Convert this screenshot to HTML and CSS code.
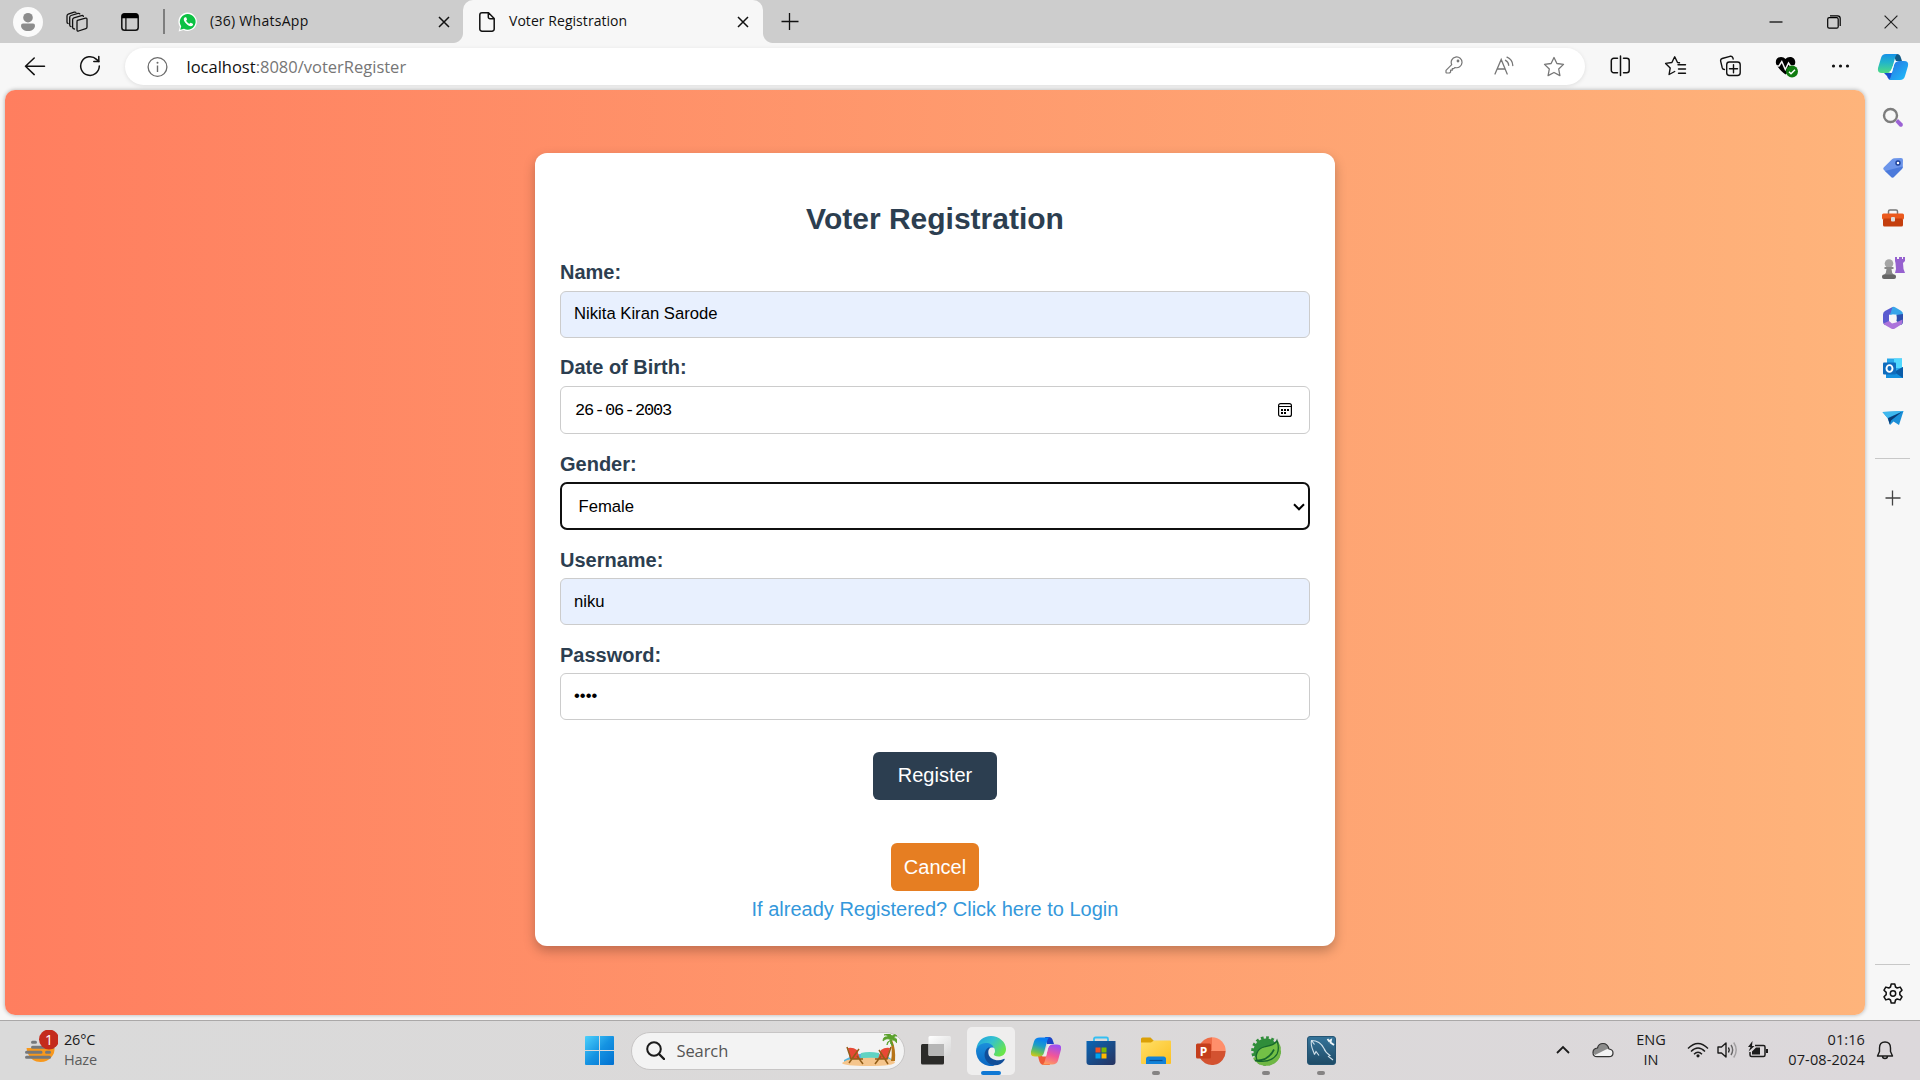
FILE: index.html
```html
<!DOCTYPE html>
<html lang="en">
<head>
<meta charset="utf-8">
<title>Voter Registration</title>
<link rel="stylesheet" href="styles.css">
</head>
<body>
<header class="tabstrip">
  <div class="tab-tools">
    <svg class="avatar" width="30" height="30" viewBox="0 0 30 30"><circle cx="15" cy="15" r="15" fill="#fafafa"/><circle cx="15" cy="10.700" r="4.800" fill="#8c8c8c"/><path d="M8 18.500q0-2 2-2h10q2 0 2 2c0 3.500-3 5.500-7 5.500s-7-2-7-5.500z" fill="#8c8c8c"/></svg>
    <svg class="workspaces" width="22" height="22" viewBox="0 0 22 22" fill="none" stroke="#111" stroke-width="1.300" stroke-linejoin="round" stroke-linecap="round"><path d="M11.500 9.300l8-2.200q1.500-.3 1.500 1.200v7.700q0 1.300-1.200 1.700l-7.300 2.300q-1.500.4-1.500-1.200v-7.900q0-1.200.5-1.600z"/><path d="M8.500 18q-1.900 0-1.900-1.700V8.800q0-1.600 1.300-2l7.600-2.200q1.500-.4 1.900.8"/><path d="M5 15.700q-1.200-.2-1.300-1.700V6.500q0-1.600 1.300-2l7-2.100q1.300-.3 1.800.5"/><path d="M2.100 12.500q-1.100-.4-1.100-1.600V5q0-1.500 1.200-1.900l6-1.900q1.200-.3 1.700.2"/></svg>
    <svg class="vtabs" width="18" height="18" viewBox="0 0 18 18"><rect x=".8" y=".8" width="16.400" height="16.400" rx="2.800" fill="none" stroke="#111" stroke-width="1.500"/><path d="M.8 5.300V3A2.300 2.300 0 0 1 3 .6h12A2.300 2.300 0 0 1 17.200 3v2.300z" fill="#000"/><path d="M4.900 5v12" stroke="#111" stroke-width="1.300"/></svg>
    <span class="separator"></span>
  </div>
  <div class="tab">
    <svg class="favicon" width="20" height="20" viewBox="0 0 20 20"><path d="M.6 19.500l1.300-4.700A9.200 9.200 0 1 1 5.500 18z" fill="#fff"/><path d="M2.200 17.800l1-3.500A7.900 7.900 0 1 1 6 16.800z" fill="#0cc143"/><path d="M7 5.300c-1.800.8-1.600 3.400.8 6 2.400 2.600 5.400 3.900 6.800 2.200.6-.9.500-1.600.2-1.800l-2-1c-.4-.1-.7.200-1.300 1-.3.300-2.900-1.600-3.300-3-.1-.3 1-1 .8-1.500l-.7-1.600c-.2-.4-.7-.5-1.300-.3z" fill="#fff"/></svg>
    <span class="tab-title title-wide">(36) WhatsApp</span>
    <svg class="tab-close" width="12" height="12" viewBox="0 0 12 12"><path d="M1 1l10 10M11 1L1 11" stroke="#111" stroke-width="1.500"/></svg>
  </div>
  <div class="tab tab-active">
    <svg class="pageicon" width="16" height="20" viewBox="0 0 16 20"><path d="M3 .8h6.500l5.700 5.700V17a2.200 2.200 0 0 1-2.200 2.200H3A2.200 2.200 0 0 1 .8 17V3A2.200 2.200 0 0 1 3 .8zM9.300 1v4a1.700 1.700 0 0 0 1.700 1.700h4" fill="none" stroke="#111" stroke-width="1.500"/></svg>
    <span class="tab-title">Voter Registration</span>
    <svg class="tab-close" width="12" height="12" viewBox="0 0 12 12"><path d="M1 1l10 10M11 1L1 11" stroke="#111" stroke-width="1.500"/></svg>
  </div>
  <svg class="newtab" width="18" height="18" viewBox="0 0 18 18"><path d="M.5 8.500h17M8.500 0v17" stroke="#111" stroke-width="1.300"/></svg>
  <div class="window-buttons">
    <svg width="14" height="14" viewBox="0 0 14 14"><path d="M.5 7h13" stroke="#000" stroke-width="1.200"/></svg>
    <svg width="14" height="14" viewBox="0 0 14 14" fill="none" stroke="#000" stroke-width="1.200"><rect x=".7" y="2.700" width="10.500" height="10.500" rx="1.500"/><path d="M3 .8h7.500a2.700 2.700 0 0 1 2.700 2.700V11"/></svg>
    <svg width="14" height="14" viewBox="0 0 14 14"><path d="M.6.6l12.800 12.800M13.400.6L.6 13.400" stroke="#222" stroke-width="1.200"/></svg>
  </div>
</header>

<nav class="toolbar">
  <svg class="back" width="22" height="20" viewBox="0 0 22 20" fill="none" stroke="#111" stroke-width="1.500" stroke-linecap="round" stroke-linejoin="round"><path d="M10.200 1L1.500 9.300l8.700 8.300M1.500 9.300H20.500"/></svg>
  <svg class="reload" width="22" height="22" viewBox="0 0 22 22" fill="none" stroke="#111" stroke-width="1.500" stroke-linecap="round"><path d="M20.300 11A9.300 9.300 0 1 1 17.500 4.400l2.200 2"/><path d="M19.800 1.600v5h-5"/></svg>
  <div class="address">
    <svg width="22" height="22" viewBox="0 0 22 22"><circle cx="11.500" cy="11" r="9.400" fill="none" stroke="#6b6b6b" stroke-width="1.300"/><path d="M11.500 9.500V16" stroke="#6b6b6b" stroke-width="1.400"/><circle cx="11.500" cy="6.800" r="1" fill="#6b6b6b"/></svg>
    <span class="url"><span class="host">localhost</span>:8080/voterRegister</span>
    <div class="address-actions">
      <svg width="18" height="18" viewBox="0 0 18 18" fill="none" stroke="#767676" stroke-width="1.200" stroke-linejoin="round"><path d="M6.700 8.600A5.400 5.400 0 1 1 10 11.500L8.700 12.600H7.300v1.600H5.600V16l-1 1H1.800q-.8 0-.8-.8v-1.900z"/><circle cx="13" cy="5" r=".8" fill="#767676"/></svg>
      <svg width="20" height="20" viewBox="0 0 20 20" fill="none" stroke="#767676" stroke-width="1.300" stroke-linecap="round"><path d="M1 18L7.200 3.500 13.200 18M3.300 13h7.800M11.500 4.300q3 1.500 3.200 5M13 1.200q5.500 2.300 5.800 8.300"/></svg>
      <svg width="22" height="22" viewBox="0 0 22 22" fill="none" stroke="#767676" stroke-width="1.300" stroke-linejoin="round"><path d="M11 1.500l2.900 6 6.600.9-4.800 4.600 1.200 6.600-5.900-3.100-5.900 3.100L6.300 13 1.500 8.400l6.600-.9z"/></svg>
    </div>
  </div>
  <div class="toolbar-actions">
    <svg width="22" height="22" viewBox="0 0 22 22" fill="none" stroke="#111" stroke-width="1.500" stroke-linecap="round"><path d="M8 3.300H4.300A2.500 2.500 0 0 0 1.800 5.800v9.400a2.500 2.500 0 0 0 2.500 2.500H8M14 3.300h3.200a2.500 2.500 0 0 1 2.500 2.500v9.400a2.500 2.500 0 0 1-2.500 2.500H14M11 1v19.500"/></svg>
    <svg width="22" height="22" viewBox="0 0 22 22" fill="none" stroke="#111" stroke-width="1.400" stroke-linecap="round" stroke-linejoin="round"><path d="M15 7.800l-2-.3-2.800-5.700-2.800 5.700-6.300.9 4.600 4.500L4.600 19.500l5.600-3M13.500 9.700H21M14 14h7M14 18.300h7"/></svg>
    <svg width="22" height="22" viewBox="0 0 22 22" fill="none" stroke="#111" stroke-width="1.400" stroke-linecap="round" stroke-linejoin="round"><path d="M5 14.500q-1.800 0-2.300-1.800L1.200 6.300q-.5-2.200 1.500-2.800L10.500 1.300q2-.5 2.700 1.200l.5 1.500"/><rect x="7.200" y="7" width="13.500" height="13.500" rx="2.700"/><path d="M14 9.800v8M10 13.800h8"/></svg>
    <svg class="heart" width="24" height="23" viewBox="0 0 24 23"><path d="M11 4C13.500.7 20.800 1.300 20.800 7.300c0 4-6 9.500-9.800 12.200C7 16.300 1.300 11 1.300 7.300 1.300 1.300 8.500.7 11 4z" fill="#000"/><path d="M0 11h4.500l2.800-4.500 3.500 8L14 8l2 3h5" fill="none" stroke="#f7f7f7" stroke-width="1.500"/><circle cx="17.500" cy="16.500" r="6" fill="#107c10"/><path d="M14.500 16.800l2 2 4-4" fill="none" stroke="#fff" stroke-width="1.500"/></svg>
    <svg width="22" height="22" viewBox="0 0 22 22" fill="#111"><circle cx="4" cy="11" r="1.600"/><circle cx="11" cy="11" r="1.600"/><circle cx="18" cy="11" r="1.600"/></svg>
  </div>
  <svg class="copilot" width="32" height="28" viewBox="0 0 32 28">
    <defs>
      <linearGradient id="ca" x1="0" y1="0" x2="0" y2="1"><stop offset="0" stop-color="#1691e8"/><stop offset=".45" stop-color="#22b5c9"/><stop offset="1" stop-color="#4fdc82"/></linearGradient>
      <linearGradient id="cb" x1="0" y1="0" x2="1" y2="1"><stop offset="0" stop-color="#2a6fe0"/><stop offset="1" stop-color="#1ec0fb"/></linearGradient>
    </defs>
    <path d="M16 1h4q3 0 4 4l1 3h-6z" fill="#125a86"/><path d="M7 20h9l3 7h-4q-4 0-5-4z" fill="#1650d0"/>
    <path d="M9 1h12q-2 0-3 4l-3 11q-1 4-5 4H5q-5 0-4-5L4 5q1-4 5-4z" fill="url(#ca)"/>
    <path d="M23 27H11q2 0 3-4l3-11q1-4 5-4h5q5 0 4 5l-3 10q-1 4-5 4z" fill="url(#cb)"/>
    <path d="M18 8h4q-4 0-5 4l-2 7h-3q2-1 3-4z" fill="#fff"/>
  </svg>
</nav>

<main class="workspace">
  <section class="page">
    <form class="card">
      <h1>Voter Registration</h1>
      <label for="name">Name:</label>
      <input class="field autofill" id="name" type="text" value="Nikita Kiran Sarode">
      <label>Date of Birth:</label>
      <div class="field date"><span class="date-value"><span>26</span><i>-</i><span>06</span><i>-</i><span>2003</span></span>
        <svg width="14" height="14" viewBox="0 0 14 14"><rect x=".6" y=".6" width="12.800" height="12.800" rx="2" fill="none" stroke="#000" stroke-width="1.200"/><path d="M1 3.500h12" stroke="#000"/><path d="M3 6h2v2H3zM6 6h2v2H6zM9 6h2v2H9zM3 9h2v2H3zM6 9h2v2H6z"/></svg>
      </div>
      <label class="low">Gender:</label>
      <div class="field select"><span>Female</span>
        <svg width="12" height="8" viewBox="0 0 12 8"><path d="M1 1.300l5 5 5-5" fill="none" stroke="#000" stroke-width="2"/></svg>
      </div>
      <label class="low" for="user">Username:</label>
      <input class="field autofill user" id="user" type="text" value="niku">
      <label class="low" for="pass">Password:</label>
      <input class="field" id="pass" type="password" value="niku">
      <button class="btn register" type="button">Register</button>
      <button class="btn cancel" type="button">Cancel</button>
      <a class="login">If already Registered? Click here to Login</a>
    </form>
  </section>
  <aside class="sidebar">
    <div class="side-icons">
      <svg width="22" height="22" viewBox="0 0 22 22"><path d="M14 14l2-2 4.500 4.500q1 1.500-.2 2.700-1.300 1.200-2.700.2L13.500 15z" fill="#9b62d4"/><circle cx="8.500" cy="8.500" r="6.500" fill="none" stroke="#7d7d7d" stroke-width="2.400"/></svg>
      <svg width="22" height="22" viewBox="0 0 22 22"><path d="M1.700 10.500L10 2.200Q11 1.200 12.500 1.200L19 1q2 0 2 2l-.2 6.500q0 1.500-1 2.500l-8 8q-1.300 1.200-2.500 0l-7.600-7.200q-1-1.200 0-2.300z" fill="#6c95ea"/><path d="M20.800 9.500q0 1.500-1 2.500l-8 8q-1.300 1.200-2.500 0L3 14z" fill="#4c7adb"/><circle cx="16" cy="6" r="2" fill="#fff" stroke="#1e4198" stroke-width="1.400"/></svg>
      <svg width="24" height="20" viewBox="0 0 24 20"><path d="M7.500 6V3.500q0-1.500 1.500-1.500h6q1.500 0 1.500 1.500V6" fill="none" stroke="#777" stroke-width="1.500"/><rect x="1" y="5.500" width="22" height="6" rx="1.500" fill="#eb5a1e"/><rect x="2" y="10.500" width="20" height="8" rx="1.500" fill="#c43e0d"/><rect x="10" y="9" width="4" height="4.500" rx="1" fill="#ddd"/></svg>
      <svg width="24" height="24" viewBox="0 0 24 24"><path d="M14 1h2v2h2V1h3v2h1V1h2v4l-2 2 .5 6 1.500 4H14l1-4-.5-6-.5-2z" fill="#9661cf"/><circle cx="8" cy="7.500" r="4.300" fill="#a5a5a5"/><path d="M3.500 11h9v2h-2q0 4 2.500 6H3q2.500-2 2.500-6h-2z" fill="#888"/><rect x="1" y="18.500" width="14" height="4.500" rx="2" fill="#666"/></svg>
      <svg width="22" height="24" viewBox="0 0 22 24"><path d="M10.500 1L3 5Q1 6 1 8.500V16q0 2 2 3l4-1.500V9l5.500-3.500V2.500z" fill="#5a5bd0"/><path d="M10.500 1q1.500-.5 3 .5l5.500 3.300q2 1.200 2 3.700V13l-7-4.500-6 .5z" fill="#38a6ea"/><path d="M21 8v8q0 2-2 3l-4.500-4V9z" fill="#2d4fae"/><path d="M1.500 17.500L7 15l3 2.500 4-1 6.500-3V16q0 2-2 3l-6 3.700q-1.500.8-3 0L3 19z" fill="#ac74db"/><circle cx="11" cy="12" r="3.600" fill="#f7f7f7"/></svg>
      <svg width="22" height="22" viewBox="0 0 22 22"><path d="M5 1.500h15v17H5z" fill="#28a8ea"/><path d="M12 1.500h8V11h-8z" fill="#50d9ff"/><path d="M4 10l9 4 8-4v11H4z" fill="#1490df"/><path d="M21 10v11L12 15z" fill="#0a5ca8"/><rect x="1" y="5.500" width="13" height="12" rx="1" fill="#0f6cbd"/><ellipse cx="7.500" cy="11.500" rx="3" ry="3.400" fill="none" stroke="#fff" stroke-width="1.900"/></svg>
      <svg width="22" height="18" viewBox="0 0 22 18"><path d="M.5 3L21.500 2 17 16l-5.500-3.500L8 16 5.500 9z" fill="#1b8fd8"/><path d="M.5 3L21.500 2 5.500 9z" fill="#3fb8ee"/><path d="M20 2.700L6 9.200l1.800 6.300L9 11.500z" fill="#0b3b75"/></svg>
    </div>
    <span class="side-rule"></span>
    <svg class="side-add" width="16" height="16" viewBox="0 0 16 16"><path d="M.5 8h15M7.500 .5v15" stroke="#444" stroke-width="1.300"/></svg>
    <span class="side-rule side-rule-bottom"></span>
    <svg class="gear" width="22" height="22" viewBox="0 0 22 22" fill="none" stroke="#111" stroke-width="1.500" stroke-linejoin="round"><path d="M9.200 1h3.600l.7 3 1.700 1 3-.9 1.800 3.100-2.200 2.200v2.200l2.200 2.200-1.800 3.100-3-.9-1.700 1-.7 3H9.200l-.7-3-1.700-1-3 .9L2 13.800l2.200-2.200V9.400L2 7.200l1.800-3.100 3 .9 1.700-1z"/><circle cx="11" cy="10.500" r="2.700"/></svg>
  </aside>
</main>

<footer class="taskbar">
  <div class="weather">
    <svg width="34" height="36" viewBox="0 0 34 36"><path d="M2.500 18h28q.5 5-3 9-4 5-11 5-9 0-13-9z" fill="#f7981d"/><path d="M0 0h34v17.500H0z" fill="#dadada"/><path d="M8.500 12.300h3M8.500 17.300H29M2.500 22.300H17M22.500 22.300H25.500M2.500 27.300H25.500" stroke="#75787b" stroke-width="3" stroke-linecap="round"/><circle cx="25" cy="9.500" r="10" fill="#c42b1c"/><text x="25" y="14.700" text-anchor="middle" class="badge-number">1</text></svg>
    <div class="weather-text"><span>26°C</span><span class="muted">Haze</span></div>
  </div>
  <div class="apps">
    <svg class="start" width="29" height="29" viewBox="0 0 29 29"><defs><linearGradient id="win" x1="0" y1="0" x2="1" y2="1"><stop offset="0" stop-color="#4cd0fb"/><stop offset=".5" stop-color="#1593e2"/><stop offset="1" stop-color="#0170d0"/></linearGradient></defs><path d="M1 0h13v14H0V1q0-1 1-1zM15 0h13q1 0 1 1v13H15zM0 15h14v14H1q-1 0-1-1zM15 15h14v13q0 1-1 1H15z" fill="url(#win)"/></svg>
    <div class="search">
      <svg width="19" height="19" viewBox="0 0 19 19" fill="none" stroke="#1b1b1b" stroke-width="2"><circle cx="8" cy="8" r="6.800"/><path d="M13 13l5 5" stroke-width="2.400" stroke-linecap="round"/></svg>
      <span>Search</span>
      <svg class="beach" width="56" height="33" viewBox="0 0 56 33"><path d="M3 26q12-7 24-7 16 0 25 7v4H3z" fill="#56b8df"/><path d="M20 19q8-2 18 0v5H20z" fill="#60d3c2"/><path d="M1 29q5-4 12-4 15-2 24-1 10-1 17 4 0 4-26 4T1 29z" fill="#f5c58c"/><path d="M7 14q5-1 9 2l3 9H9zM49 14q-5-1-9 2l-3 9h9z" fill="#e74835"/><path d="M6 13l4 12h12M8 29l10-14M22 30l-6-8M50 13l-4 12H34M47 30L38 16M34 30l6-8" fill="none" stroke="#925e18" stroke-width="1.500"/><path d="M49 6q3 10 1 21h4q1-12-3-21z" fill="#b67419"/><path d="M50 6q-4-3-8 1 0-5 5-4-1-3-4-2 5-3 8 1 3-3 5 0-3-1-3 2 4 0 3 5-3-4-6-3l2 6q-4-2-2-6-3 1-4 5-1-3 4-5z" fill="#5aa12c" stroke="#5aa12c" stroke-width=".8"/></svg>
    </div>
    <svg class="taskview" width="30" height="29" viewBox="0 0 30 29"><defs><linearGradient id="tv" x1="0" y1="0" x2="1" y2="1"><stop offset="0" stop-color="#fff"/><stop offset="1" stop-color="#d7d7d7"/></linearGradient></defs><rect x="0" y="8" width="23" height="20.500" rx="1.500" fill="#2b2b29"/><rect x="7.500" y="0" width="22.500" height="20" rx="1.500" fill="url(#tv)"/><path d="M7.500 8H23v12H9q-1.500 0-1.500-1.500z" fill="#b6b6b6"/></svg>
    <div class="app app-current">
      <svg width="32" height="32" viewBox="0 0 32 32"><defs><linearGradient id="e1" x1="0" y1="0" x2="1" y2=".6"><stop offset="0" stop-color="#1e9fe0"/><stop offset=".5" stop-color="#34c1cf"/><stop offset="1" stop-color="#69e54b"/></linearGradient><linearGradient id="e2" x1="0" y1="0" x2="0" y2="1"><stop offset="0" stop-color="#1b8fdb"/><stop offset="1" stop-color="#0b66c2"/></linearGradient></defs><path d="M1.300 14.500C2 6 8.500 1 16 1c8 0 15 6 15 13 0 5-3.500 7.500-7.500 7.500-3 0-5-1-4.700-2.200.3-.9 1.200-1.500 1.200-3.300 0-4-4-7-9-7-4.500 0-8 2-9.700 5.500z" fill="url(#e1)"/><path d="M1 16c0-4 4.500-8 10-8 4 0 7 2 8 5-6-2-9 4-7 9 1.600 4.500 5 8 8 8.500A15 15 0 0 1 1 16z" fill="url(#e2)"/><path d="M13.500 12.500C8 16 9 23 12 26.500c5 6 14 4.500 17.500-1.500.5-1 0-1.500-.8-1-6 3-14.200.5-15.200-5-.5-2.800 0-5 2-6.500z" fill="#114e99"/></svg>
      <span class="running"></span>
    </div>
    <div class="app">
      <svg width="30" height="28" viewBox="0 0 30 28"><defs><linearGradient id="c1" x1=".3" y1="0" x2="0" y2="1"><stop offset="0" stop-color="#087ff2"/><stop offset=".35" stop-color="#1b9cc7"/><stop offset=".7" stop-color="#6dc153"/><stop offset="1" stop-color="#f3c806"/></linearGradient><linearGradient id="c2" x1=".5" y1="0" x2=".2" y2="1"><stop offset="0" stop-color="#a150ef"/><stop offset=".5" stop-color="#f25698"/><stop offset="1" stop-color="#ffa25c"/></linearGradient></defs><path d="M14 0h4q3 0 4 4l1 3h-7z" fill="#1b43c4"/><path d="M7 19h9l3 9h-6q-4 0-5-5z" fill="#ef5a39"/><path d="M9 .5h10q-2 0-3 4l-3 11q-1 4-5 4H4q-5 0-4-5l3-10q1-4 6-4z" fill="url(#c1)"/><path d="M21 27.500H11q2 0 3-4l3-12q1-4 5-4h4q5 0 4 5l-3 11q-1 4-6 4z" fill="url(#c2)"/><path d="M17 7.500h4q-3 0-4 4l-2 8h-4q2-1 2.500-4z" fill="#ece9ef"/></svg>
    </div>
    <div class="app">
      <svg width="30" height="30" viewBox="0 0 30 30"><defs><linearGradient id="ms" x1="0" y1="0" x2="1" y2="1"><stop offset="0" stop-color="#0a66b5"/><stop offset="1" stop-color="#28335f"/></linearGradient></defs><path d="M8 6V3q0-1.500 1.500-1.500h11Q22 1.500 22 3v3" fill="none" stroke="#35bff2" stroke-width="1.800"/><path d="M.5 5h29v21q0 3-3 3h-23q-3 0-3-3z" fill="url(#ms)"/><path d="M9.500 11.500h5v5h-5z" fill="#f25022"/><path d="M15.500 11.500h5v5h-5z" fill="#7fba00"/><path d="M9.500 17.500h5v5h-5z" fill="#00a4ef"/><path d="M15.500 17.500h5v5h-5z" fill="#ffb900"/></svg>
    </div>
    <div class="app">
      <svg width="30" height="28" viewBox="0 0 30 28"><defs><linearGradient id="fo" x1="0" y1="0" x2="1" y2="1"><stop offset="0" stop-color="#ffdf68"/><stop offset="1" stop-color="#fcc021"/></linearGradient></defs><path d="M0 2q0-1.500 1.500-1.500h8l3 3h0v5H0z" fill="#dba007"/><path d="M0 5.500h10l3-2h16q1 0 1 1V26q0 1-1 1H1q-1 0-1-1z" fill="url(#fo)"/><path d="M5 27v-5q0-2.500 2.500-2.500h15q2.500 0 2.500 2.500v5z" fill="#1282d8"/><path d="M8.500 23.500h13" stroke="#084f94" stroke-width="1.200"/></svg>
      <span class="open"></span>
    </div>
    <div class="app">
      <svg width="30" height="28" viewBox="0 0 30 28"><path d="M16 14V.3A13.700 13.700 0 0 0 3 10z" fill="#ed6c47"/><path d="M16 .3A13.700 13.700 0 0 1 29.700 14H16z" fill="#ff8f6b"/><path d="M29.700 14A13.800 13.800 0 0 1 3 19l3-5z" fill="#d35230"/><rect x="0" y="6.500" width="15" height="15" rx="1.500" fill="#c43e1c"/><text x="7.500" y="18.500" text-anchor="middle" class="ppt-letter">P</text></svg>
    </div>
    <div class="app">
      <svg width="30" height="30" viewBox="0 0 30 30"><circle cx="15" cy="15" r="12.500" fill="#2f8d3a"/><circle cx="15" cy="15" r="13.300" fill="none" stroke="#2f8d3a" stroke-width="3" stroke-dasharray="2.700 2.500"/><path d="M27 5q4 6 2.500 14T18 29.500Q7 31 2 22l15-7z" fill="#6fb744"/><path d="M26 4.500c-2 5-8 5-13 6.500-7 2-9.500 9-6.500 14 8 1 16-1 19.500-7 2-4 1.500-9 0-13.500z" fill="#73c046" stroke="#17682d" stroke-width="1.300"/><path d="M4 24.500q13 1 19-11" fill="none" stroke="#17682d" stroke-width="1.700"/></svg>
      <span class="open"></span>
    </div>
    <div class="app">
      <svg width="29" height="29" viewBox="0 0 29 29"><defs><linearGradient id="my" x1="0" y1="0" x2="0" y2="1"><stop offset="0" stop-color="#35749a"/><stop offset="1" stop-color="#1f4b66"/></linearGradient></defs><rect x=".5" y=".5" width="28" height="28" rx="2.500" fill="url(#my)" stroke="#245473"/><path d="M7.500 18.500C6 14 3 9 4.500 4.500c5 0 10 3 12.500 8 1 3 3 5 6 7l-1.500 1L26 24M7.500 18.500l1.500-3 3 4M4.500 4.500l3 4" fill="none" stroke="#d3e2eb" stroke-width="1.100"/><path d="M20.500 3l1.500 2 2-1-.5 2.500L27 9" fill="none" stroke="#eef5f8" stroke-width="1.800"/></svg>
      <span class="open"></span>
    </div>
  </div>
  <div class="tray">
    <svg class="chev" width="14" height="10" viewBox="0 0 14 10"><path d="M1 8l6-6 6 6" fill="none" stroke="#1b1b1b" stroke-width="1.800"/></svg>
    <svg class="cloud" width="22" height="16" viewBox="0 0 22 16"><path d="M5 14.700h12q4 0 4-3.700 0-3.500-4-4Q15.500 1.500 11 1.500T5.500 6Q1 6.500 1 10.500q0 4.200 4 4.200z" fill="#f3f3f3"/><path d="M1 10.500Q1 6.500 5.500 6 7 1.500 11 1.500t6 5l-3 1-11 5.500z" fill="#8b8b8b"/><path d="M5 14.700h12q4 0 4-3.700 0-3.500-4-4Q15.500 1.500 11 1.500T5.500 6Q1 6.500 1 10.500q0 4.200 4 4.200z" fill="none" stroke="#333" stroke-width="1.200"/></svg>
    <div class="lang"><span>ENG</span><span>IN</span></div>
    <svg class="wifi" width="22" height="16" viewBox="0 0 22 16" fill="none" stroke="#1b1b1b" stroke-width="1.400"><path d="M1 6.500q10-10 20 0M4 9.500q7-7 14 0M7 12.200q4-4 8 0"/><circle cx="11" cy="13.800" r="1.600" fill="#1b1b1b" stroke="none"/></svg>
    <svg class="sound" width="22" height="18" viewBox="0 0 22 18" fill="none" stroke="#1b1b1b" stroke-width="1.400" stroke-linejoin="round"><path d="M1 6h3.500L9 2v14l-4.500-4H1z"/><path d="M11.500 6.500q1.500 2.500 0 5"/><path d="M14 4q3.300 5 0 10" opacity=".6"/><path d="M16.700 1.500q5 7.500 0 15" opacity=".3"/></svg>
    <svg class="battery" width="22" height="18" viewBox="0 0 22 18"><path d="M8 4.500h8.500q1.500 0 1.500 1.500v8q0 1.500-1.500 1.500h-12Q3 15.500 3 14v-3" fill="none" stroke="#1b1b1b" stroke-width="1.500"/><path d="M9 6.500h4v7H5v-3zM19 8h2v4h-2z" fill="#1b1b1b"/><path d="M5.500 0L1 6h2.500L1.500 10.500 7.500 5H5z" fill="#1b1b1b"/></svg>
    <div class="clock"><span>01:16</span><span>07-08-2024</span></div>
    <svg class="bell" width="18" height="20" viewBox="0 0 18 20" fill="none" stroke="#1b1b1b" stroke-width="1.400" stroke-linejoin="round"><path d="M9 1q-5.500 0-5.500 6v3.500L1.500 15h15L14.500 10.500V7q0-6-5.500-6zM6.500 15q0 2.500 2.500 2.500t2.500-2.500"/></svg>
  </div>
</footer>
</body>
</html>
```
FILE: styles.css
```css
* { box-sizing: border-box; }

body {
  margin: 0;
  width: 1920px;
  height: 1080px;
  display: flex;
  flex-direction: column;
  overflow: hidden;
  background: #f7f7f7;
  font-family: "Open Sans", "Noto Sans", sans-serif;
  color: #1b1b1b;
}

svg { display: block; flex: none; }

/* Tab strip */
.tabstrip {
  height: 43px;
  flex: none;
  display: flex;
  align-items: center;
  background: #cdcdcd;
}
.tab-tools { width: 166px; display: flex; align-items: center; padding-left: 13px; }
.workspaces { margin-left: 23px; }
.vtabs { margin-left: 33px; }
.separator { width: 2px; height: 25px; margin-left: 24px; background: #7e7e7e; }
.tab {
  width: 297px;
  height: 43px;
  display: flex;
  align-items: center;
  padding: 0 13px 0 12px;
}
.favicon { margin-right: 12px; margin-top: 1px; }
.tab-title { font-size: 14px; line-height: 20px; color: #111; padding-bottom: 1px; white-space: nowrap; letter-spacing: 0.05px; }
.title-wide { letter-spacing: 0.28px; }
.tab-close { margin-left: auto; margin-top: 1px; }
.tab-active {
  position: relative;
  width: 300px;
  padding: 0 14px 0 16px;
  background: #f7f7f7;
  border-radius: 10px 10px 0 0;
}
.tab-active::before,
.tab-active::after {
  content: "";
  position: absolute;
  bottom: 0;
  width: 10px;
  height: 10px;
}
.tab-active::before { left: -10px; background: radial-gradient(circle at 0 0, #cdcdcd 9.5px, #f7f7f7 10.5px); }
.tab-active::after { right: -10px; background: radial-gradient(circle at 100% 0, #cdcdcd 9.5px, #f7f7f7 10.5px); }
.pageicon { margin-right: 14px; margin-top: 1px; }
.newtab { margin-left: 18px; }
.window-buttons { margin-left: auto; margin-right: 22px; display: flex; gap: 43.500px; }

/* Toolbar */
.toolbar { height: 47px; flex: none; display: flex; align-items: center; padding-left: 24px; }
.reload { margin-left: 33px; margin-top: -1px; }
.address {
  width: 1460px;
  height: 37px;
  margin-left: 24px;
  padding: 0 6px 0 21px;
  display: flex;
  align-items: center;
  background: #fff;
  border-radius: 19px;
  box-shadow: 0 1px 4px rgba(0, 0, 0, 0.1);
}
.url { margin-left: 18.500px; font-size: 16.500px; letter-spacing: 0; color: #767676; }
.host { color: #111; }
.address-actions { margin-left: auto; display: flex; }
.address-actions svg { width: 50px; }
.toolbar-actions { display: flex; margin-left: 7.500px; }
.toolbar-actions svg { width: 55px; }
.toolbar-actions .heart { margin-left: 1px; margin-right: -1px; }
.copilot { margin-left: 9px; }

/* Page and sidebar */
.workspace { height: 930px; flex: none; display: flex; padding-left: 5px; }
.page {
  width: 1860px;
  height: 925px;
  display: flex;
  justify-content: center;
  align-items: flex-start;
  padding-top: 63px;
  border-radius: 10px;
  background: linear-gradient(to right, #ff7e5f, #feb47b);
  box-shadow: 0 0 4px rgba(0, 0, 0, 0.3);
}
.card {
  width: 800px;
  height: 793px;
  padding: 49px 25px 0;
  display: flex;
  flex-direction: column;
  background: #fff;
  border-radius: 12px;
  box-shadow: 0 5px 12px rgba(0, 0, 0, 0.25);
  font-family: "Liberation Sans", Arial, sans-serif;
}
.card h1 {
  margin: 0 0 25px;
  font-size: 30px;
  line-height: 34px;
  text-align: center;
  color: #2c3e50;
}
.card label {
  height: 30px;
  font-size: 20px;
  line-height: 23px;
  font-weight: bold;
  color: #2c3e50;
}
.card .low { padding-top: 1px; }
.field {
  width: 750px;
  height: 47px;
  margin: 0 0 18px;
  padding: 0 13px 1px;
  border: 1px solid #ccc;
  border-radius: 6px;
  background: #fff;
  font: 16.670px "Liberation Sans", Arial, sans-serif;
  color: #000;
  outline: none;
}
.autofill { background: #e8f0fe; }
.user { padding-bottom: 0; padding-top: 1px; }
.date, .select { height: 48px; display: flex; align-items: center; justify-content: space-between; }
.date { padding: 0 17px 0 14px; }
.date-value { display: flex; font-family: "Liberation Mono", monospace; font-size: 17px; letter-spacing: -1.200px; }
.date-value i { width: 12px; text-align: center; font-style: normal; }
.select { border: 2px solid #101010; padding: 1px 3px 0 16.500px; border-radius: 7px; }
.btn {
  height: 48px;
  align-self: center;
  padding: 0;
  border: 0;
  border-radius: 6px;
  color: #fff;
  font: 20px "Liberation Sans", Arial, sans-serif;
}
.register { width: 124px; margin-top: 14px; padding-bottom: 2px; background: #2c3e50; }
.cancel { width: 88px; margin-top: 43px; background: #e67e22; }
.login { margin-top: 7px; text-align: center; font-size: 20px; line-height: 23px; color: #3498db; }

.sidebar { width: 55px; display: flex; flex-direction: column; align-items: center; }
.side-icons { display: flex; flex-direction: column; align-items: center; padding-top: 3px; padding-left: 1px; }
.side-icons svg { height: 50px; }
.side-rule { width: 35px; height: 1px; margin-top: 15px; background: #c8c8c8; }
.side-add { margin-top: 31px; }
.side-rule-bottom { margin-top: auto; }
.gear { margin: 18px 0 15px; }

/* Taskbar */
.taskbar {
  height: 60px;
  flex: none;
  display: flex;
  align-items: center;
  border-top: 1px solid #aaa8a8;
  background: linear-gradient(to right, #dadada, #dbd9d9 50%, #dcd8db);
  font-size: 14.500px;
  line-height: 20px;
}
.weather { width: 585px; display: flex; padding-left: 24px; }
.weather svg { margin-top: -1px; }
.weather-text { display: flex; flex-direction: column; margin: -1px 0 1px 6px; letter-spacing: -0.2px; }
.muted { color: #5c5c5c; }
.badge-number { font: 14px "Open Sans", sans-serif; fill: #fff; }
.ppt-letter { font: bold 12px "Open Sans", sans-serif; fill: #fff; }
.apps { display: flex; align-items: center; }
.search {
  width: 274px;
  height: 38px;
  margin: 0 16px 0 17px;
  padding: 0 7px 0 13.500px;
  display: flex;
  align-items: center;
  border: 1px solid #c7c5c5;
  border-radius: 19px;
  background: #f3f3f3;
  font-size: 16.500px;
  color: #555;
}
.search span { margin-left: 12px; letter-spacing: -0.1px; }
.beach { margin-left: auto; }
.taskview { margin-right: 12.500px; }
.app {
  position: relative;
  width: 55px;
  height: 48px;
  display: flex;
  align-items: center;
  justify-content: center;
}
.app-current::before {
  content: "";
  position: absolute;
  inset: 0 3.500px;
  border-radius: 5px;
  background: #efeeee;
}
.app svg { position: relative; }
.running, .open { position: absolute; bottom: 0; height: 4px; border-radius: 2px; }
.running { width: 20px; background: #0f78d4; }
.open { width: 8px; background: #858383; }
.tray { margin-left: auto; display: flex; align-items: center; margin-top: -1px; }
.cloud { margin-left: 22px; }
.lang { width: 40px; margin: -1px 0 0 17px; text-align: center; display: flex; flex-direction: column; }
.wifi { margin-left: 16px; }
.sound { margin-left: 8px; }
.battery { margin-left: 8px; }
.clock { width: 90px; margin: -1px 0 0 6px; display: flex; flex-direction: column; text-align: right; letter-spacing: 0.1px; }
.bell { margin: 1px 26px 0 11px; }
```
